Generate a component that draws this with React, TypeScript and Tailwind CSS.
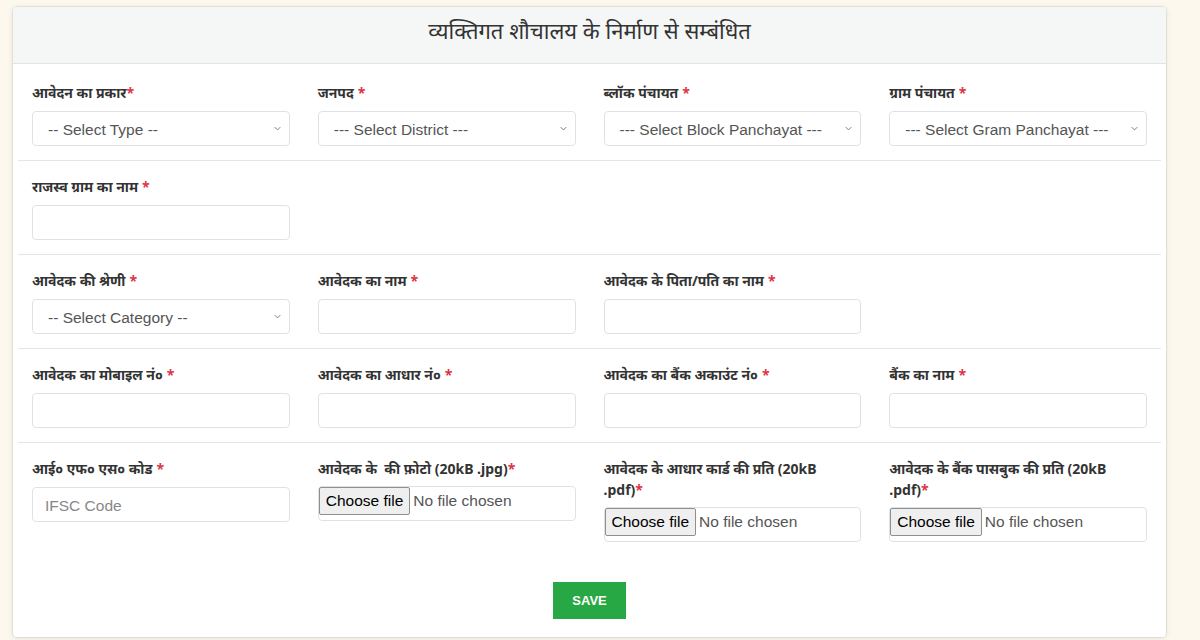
import React from 'react';

const font = { fontFamily: '"Noto Sans", "Liberation Sans", "Noto Sans Devanagari", sans-serif' };

function Label({ children }: { children: React.ReactNode }) {
  return (
    <div className="text-[14px] font-bold leading-[22px] text-[#333] mb-[7px]">
      {children}
      <span className="text-[#dc3545] ml-1">*</span>
    </div>
  );
}

function SelectBox({ text }: { text: string }) {
  return (
    <div className="h-[35px] border border-[#dee2e6] rounded bg-white flex items-center justify-between pl-[15px] pr-[7px] text-[15.5px] text-[#555]">
      <span className="font-['Liberation_Sans'] pt-[2px]">{text}</span>
      <svg width="9" height="9" viewBox="0 0 16 16" fill="none" stroke="#666" strokeWidth="1.5">
        <path d="M3 5.5l5 5 5-5" />
      </svg>
    </div>
  );
}

function TextBox({ placeholder }: { placeholder?: string }) {
  return (
    <div className="h-[35px] border border-[#dee2e6] rounded bg-white flex items-center px-3 pt-[2px] text-[15.5px] text-[#888] font-['Liberation_Sans']">
      {placeholder}
    </div>
  );
}

function FileBox() {
  return (
    <div className="h-[35px] border border-[#dee2e6] rounded bg-white flex items-start text-[15.5px] font-['Liberation_Sans']">
      <span className="h-[28px] px-[6px] flex items-center bg-[#efefef] border border-[#8f8f8f] rounded-[2px] text-black">
        Choose file
      </span>
      <span className="ml-[3px] h-[28px] flex items-center text-[#555]">No file chosen</span>
    </div>
  );
}

function Row({ children, last }: { children: React.ReactNode; last?: boolean }) {
  return (
    <div className={`mx-[5px] px-[14px] pt-[15px] pb-[14px] grid grid-cols-4 gap-x-[28px] ${last ? '' : 'border-b border-[#e5e5e5]'}`}>
      {children}
    </div>
  );
}

export default function App() {
  return (
    <div className="min-h-[640px] bg-[#fdf8ee] pt-[7px] pl-[13px] pr-[34px]" style={font}>
      <div className="w-[1153px] bg-white rounded shadow-[0_0_0_1px_rgba(0,0,0,0.06),0_1px_6px_rgba(0,0,0,0.10)] overflow-hidden">
        <div className="h-[57px] bg-[#f5f6f6] border-b border-[#e3e3e3] flex items-center justify-center pb-[9px]">
          <h1 className="text-[22px] text-[#333] font-normal">व्यक्तिगत शौचालय के निर्माण से सम्बंधित</h1>
        </div>
        <div className="pt-[3px]">
          <Row>
            <div>
              <div className="text-[14px] font-bold leading-[22px] text-[#333] mb-[7px]">
                आवेदन का प्रकार<span className="text-[#dc3545]">*</span>
              </div>
              <SelectBox text="-- Select Type --" />
            </div>
            <div>
              <Label>जनपद</Label>
              <SelectBox text="--- Select District ---" />
            </div>
            <div>
              <Label>ब्लॉक पंचायत</Label>
              <SelectBox text="--- Select Block Panchayat ---" />
            </div>
            <div>
              <Label>ग्राम पंचायत</Label>
              <SelectBox text="--- Select Gram Panchayat ---" />
            </div>
          </Row>
          <Row>
            <div>
              <Label>राजस्व ग्राम का नाम</Label>
              <TextBox />
            </div>
          </Row>
          <Row>
            <div>
              <Label>आवेदक की श्रेणी</Label>
              <SelectBox text="-- Select Category --" />
            </div>
            <div>
              <Label>आवेदक का नाम</Label>
              <TextBox />
            </div>
            <div>
              <Label>आवेदक के पिता/पति का नाम</Label>
              <TextBox />
            </div>
          </Row>
          <Row>
            <div>
              <Label>आवेदक का मोबाइल नं०</Label>
              <TextBox />
            </div>
            <div>
              <Label>आवेदक का आधार नं०</Label>
              <TextBox />
            </div>
            <div>
              <Label>आवेदक का बैंक अकाउंट नं०</Label>
              <TextBox />
            </div>
            <div>
              <Label>बैंक का नाम</Label>
              <TextBox />
            </div>
          </Row>
          <Row last>
            <div>
              <Label>आई० एफ० एस० कोड</Label>
              <TextBox placeholder="IFSC Code" />
            </div>
            <div>
              <div className="text-[14px] font-bold leading-[21px] text-[#333] mb-[7px]">
                आवेदक के&nbsp; की फ़ोटो (20kB .jpg)<span className="text-[#dc3545]">*</span>
              </div>
              <FileBox />
            </div>
            <div>
              <div className="text-[14px] font-bold leading-[21px] text-[#333] mb-[7px]">
                आवेदक के आधार कार्ड की प्रति (20kB
                <br />
                .pdf)<span className="text-[#dc3545]">*</span>
              </div>
              <FileBox />
            </div>
            <div>
              <div className="text-[14px] font-bold leading-[21px] text-[#333] mb-[7px]">
                आवेदक के बैंक पासबुक की प्रति (20kB
                <br />
                .pdf)<span className="text-[#dc3545]">*</span>
              </div>
              <FileBox />
            </div>
          </Row>
          <div className="flex justify-center pt-[26px] pb-[18px]">
            <button className="w-[73px] h-[37px] bg-[#28a745] text-white text-[13px] font-bold font-['Liberation_Sans']">
              SAVE
            </button>
          </div>
        </div>
      </div>
    </div>
  );
}
